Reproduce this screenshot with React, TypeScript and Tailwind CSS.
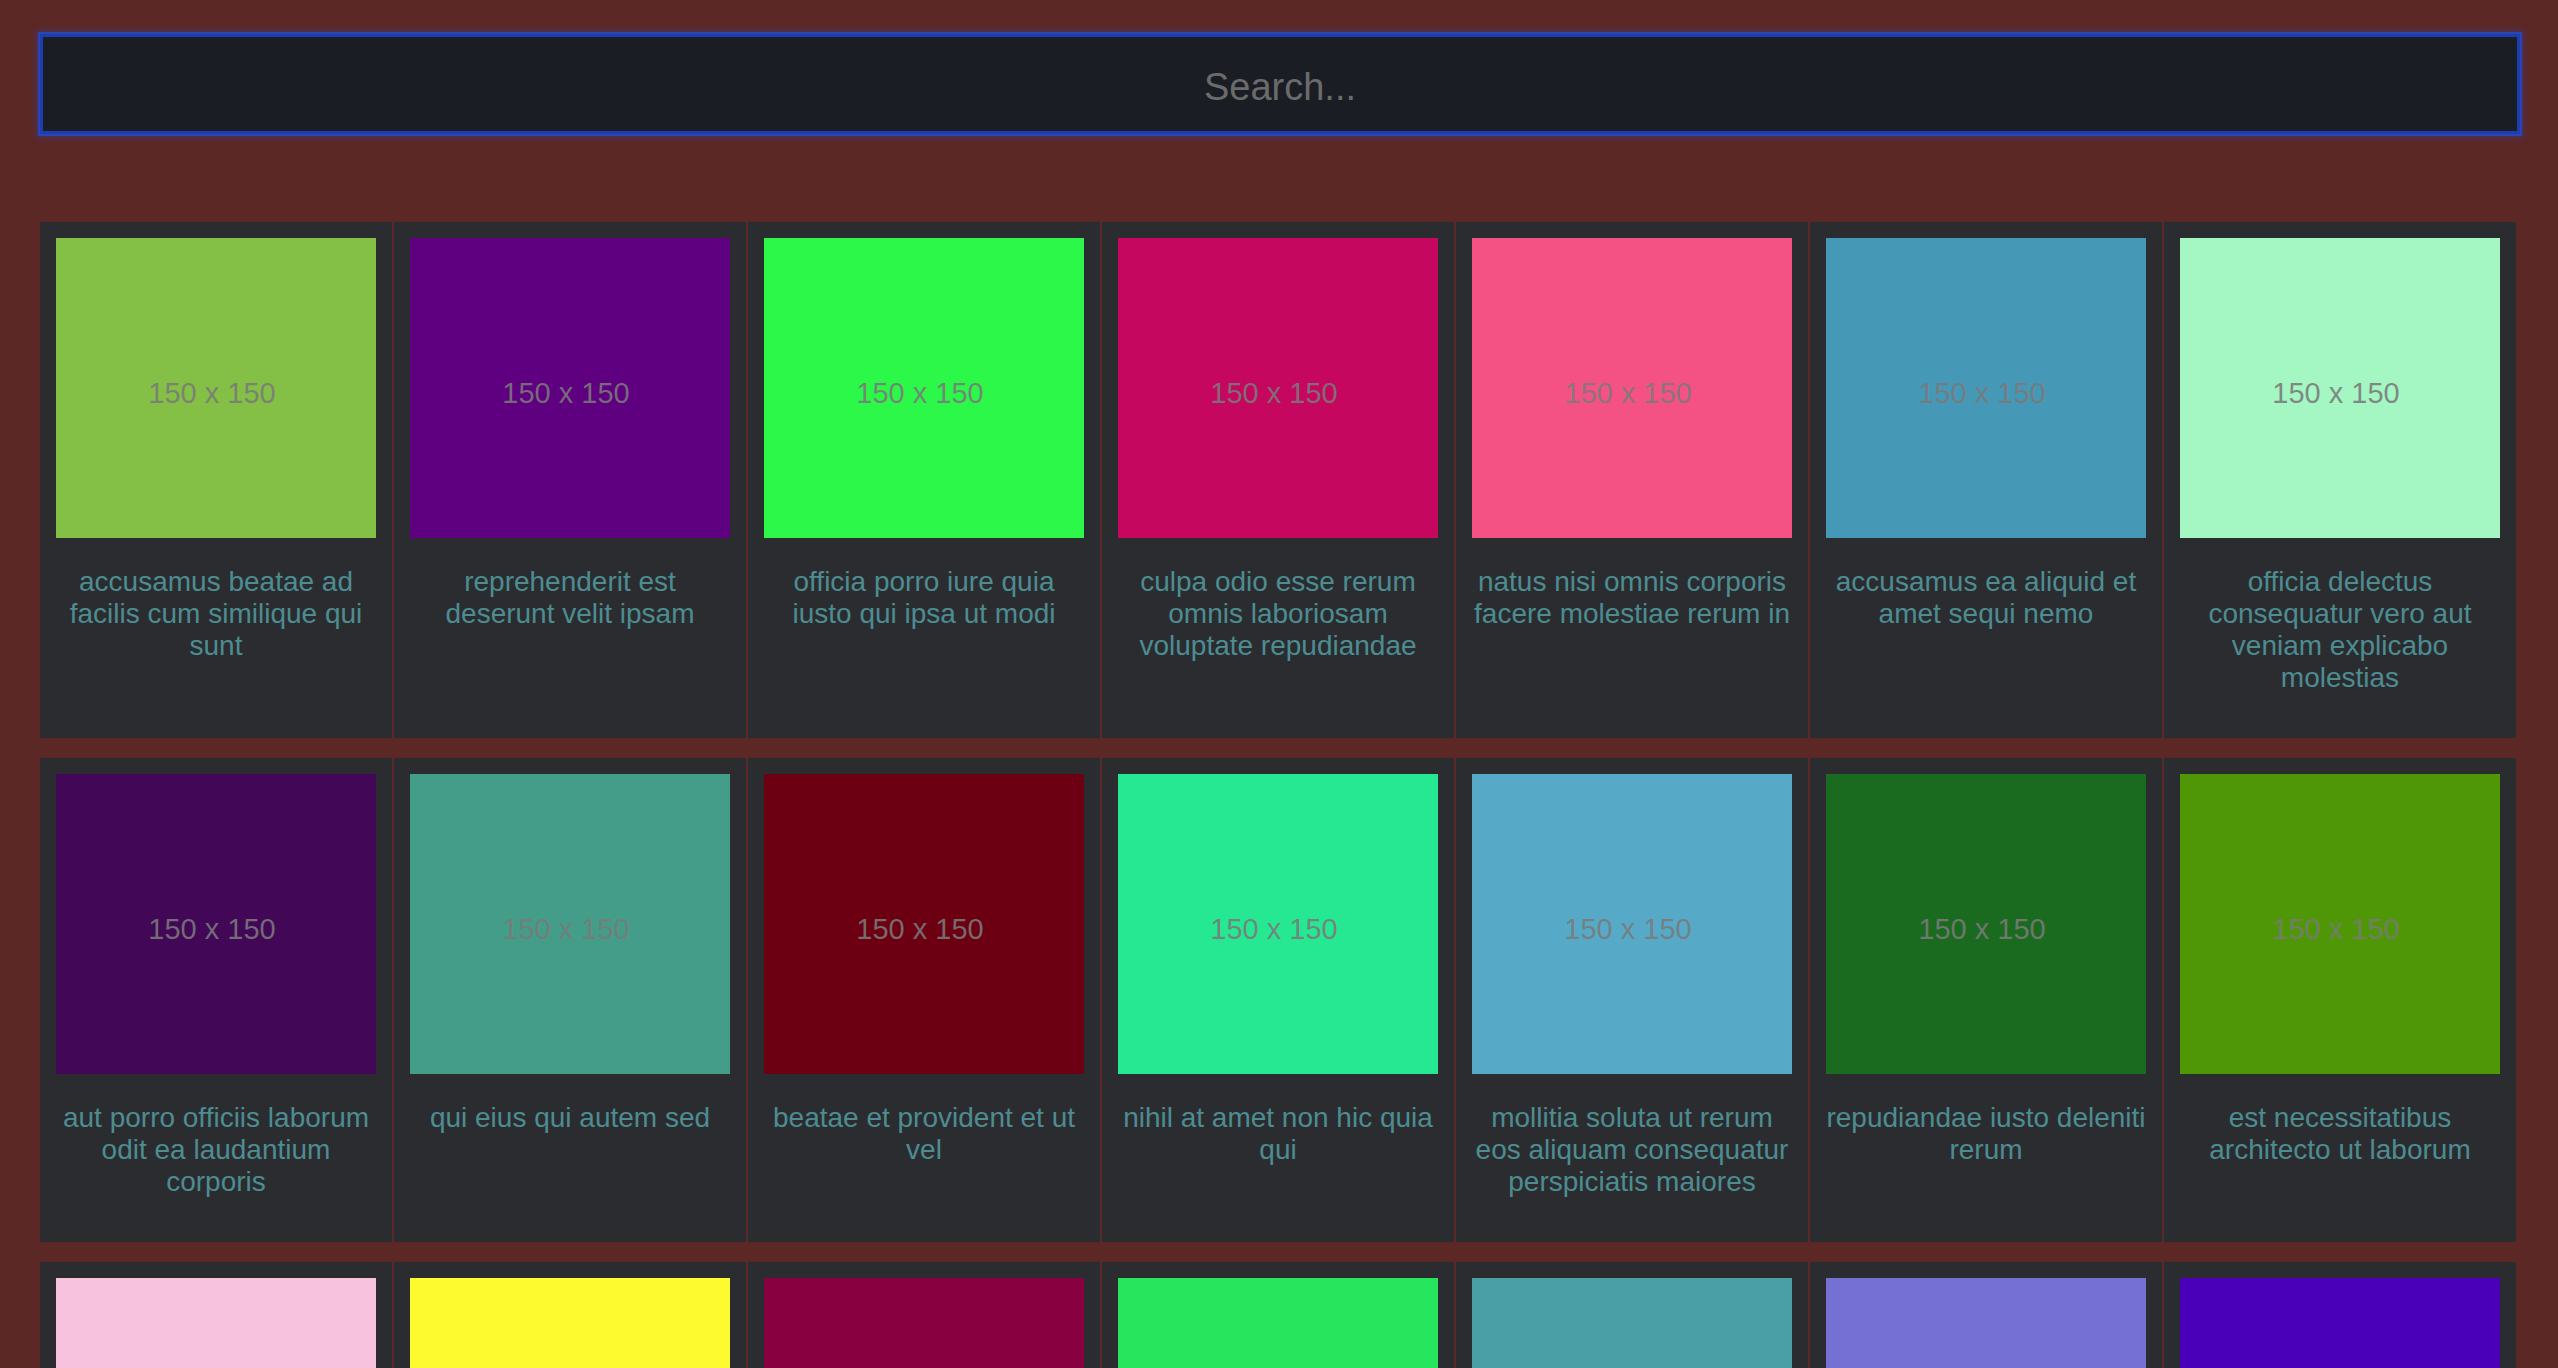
import React from "react";

type Photo = { color: string; title: string };

const photos: Photo[] = [
  { color: "#84c045", title: "accusamus beatae ad facilis cum similique qui sunt" },
  { color: "#5f0080", title: "reprehenderit est deserunt velit ipsam" },
  { color: "#2cf84a", title: "officia porro iure quia iusto qui ipsa ut modi" },
  { color: "#c60760", title: "culpa odio esse rerum omnis laboriosam voluptate repudiandae" },
  { color: "#f45285", title: "natus nisi omnis corporis facere molestiae rerum in" },
  { color: "#4699b6", title: "accusamus ea aliquid et amet sequi nemo" },
  { color: "#a4f6c3", title: "officia delectus consequatur vero aut veniam explicabo molestias" },
  { color: "#420757", title: "aut porro officiis laborum odit ea laudantium corporis" },
  { color: "#439d89", title: "qui eius qui autem sed" },
  { color: "#6c0012", title: "beatae et provident et ut vel" },
  { color: "#27e892", title: "nihil at amet non hic quia qui" },
  { color: "#56aac8", title: "mollitia soluta ut rerum eos aliquam consequatur perspiciatis maiores" },
  { color: "#1a6b1f", title: "repudiandae iusto deleniti rerum" },
  { color: "#509707", title: "est necessitatibus architecto ut laborum" },
  { color: "#f6c2de", title: "harum dicta similique quis dolore earum ex qui" },
  { color: "#fefa30", title: "iusto sunt nobis quasi veritatis quas expedita voluptatum deserunt" },
  { color: "#890040", title: "natus doloribus necessitatibus ipsa" },
  { color: "#27e65e", title: "laboriosam odit nam necessitatibus et illum dolores reiciendis" },
  { color: "#4a9ea6", title: "perferendis nesciunt eveniet et optio a" },
  { color: "#7570d4", title: "assumenda voluptatem laboriosam enim consequatur veniam placeat reiciendis error" },
  { color: "#4900b8", title: "ad et natus qui" },
];

const rows: Photo[][] = [photos.slice(0, 7), photos.slice(7, 14), photos.slice(14, 21)];

const font = { fontFamily: '"Liberation Sans", Arial, Helvetica, sans-serif' };

function Card({ p }: { p: Photo }) {
  return (
    <div className="w-[352px] shrink-0 bg-[#2b2c30] p-[16px] flex flex-col">
      <div
        className="w-[320px] h-[300px] flex items-center justify-center pt-[10px] pr-[8px]"
        style={{ backgroundColor: p.color }}
      >
        <span className="text-[29px] leading-none text-[rgba(122,122,122,0.88)]">150 x 150</span>
      </div>
      <p className="my-[28px] text-center text-[28px] leading-[32px] text-[#4d8c91]">{p.title}</p>
    </div>
  );
}

export default function App() {
  return (
    <div className="h-[1368px] overflow-hidden bg-[#5c2825]" style={font}>
      <div className="pl-[40px] pt-[34px]">
        <input
          type="text"
          placeholder="Search..."
          className="block w-[2480px] h-[100px] pt-[6px] bg-[#1b1d25] border-[3px] border-[#1c3eb0] shadow-[0_0_0_2px_#2a46b4,0_0_6px_4px_rgba(45,65,200,0.35)] outline-none text-center text-[38px] text-[#cfcfcf] placeholder:text-[#6b6b6b]"
          style={font}
        />
        <div className="mt-[88px] flex flex-col gap-[20px]">
          {rows.map((row, i) => (
            <div key={i} className="flex gap-[2px]">
              {row.map((p, j) => (
                <Card key={j} p={p} />
              ))}
            </div>
          ))}
        </div>
      </div>
    </div>
  );
}
